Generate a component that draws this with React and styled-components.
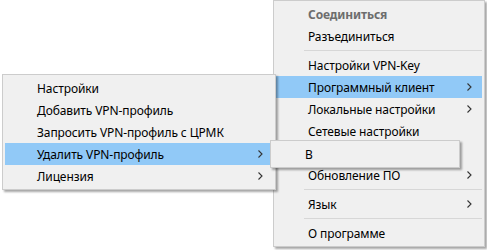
import React from 'react';
import styled, { createGlobalStyle } from 'styled-components';

const GlobalStyle = createGlobalStyle`
  html, body {
    margin: 0;
    padding: 0;
    background: #ffffff;
  }
`;

const Desktop = styled.div`
  position: relative;
  width: 487px;
  height: 250px;
  overflow: hidden;
  background: #ffffff;
  font-family: 'Noto Sans', 'Open Sans', sans-serif;
  font-size: 12px;
  letter-spacing: -0.1px;
  color: #000000;
`;

const Menu = styled.div`
  position: absolute;
  left: ${({ x }) => x}px;
  top: ${({ y }) => y}px;
  width: ${({ w }) => w}px;
  z-index: ${({ z }) => z};
  box-sizing: border-box;
  display: flex;
  flex-direction: column;
  padding: 2px;
  background: #f0f0f0;
  border: 1px solid #cccccc;
  box-shadow: 2px 2px 2px rgba(0, 0, 0, 0.35);
`;

const Item = styled.div`
  display: flex;
  align-items: center;
  height: 22px;
  padding-left: 32px;
  padding-right: 10px;
  background: ${({ active }) => (active ? '#91c9f7' : 'transparent')};
  color: ${({ disabled }) => (disabled ? '#6d6d6d' : '#000000')};
  font-weight: ${({ bold }) => (bold ? 700 : 400)};
  white-space: nowrap;
`;

const Label = styled.span`
  flex: 1;
`;

const Separator = styled.div`
  height: 7px;
  display: flex;
  align-items: center;
  padding-left: 28px;

  &::after {
    content: '';
    flex: 1;
    height: 1px;
    background: #d7d7d7;
  }
`;

const Chevron = () => (
  <svg width="5" height="8" viewBox="0 0 5 8">
    <polyline points="0.5,0.5 4,4 0.5,7.5" fill="none" stroke="#333333" strokeWidth="1.1" />
  </svg>
);

const MenuItem = ({ label, sub, ...rest }) => (
  <Item {...rest}>
    <Label>{label}</Label>
    {sub && <Chevron />}
  </Item>
);

const App = () => (
  <Desktop>
    <GlobalStyle />

    {/* main tray menu */}
    <Menu x={273} y={0} w={212} z={1}>
      <MenuItem label="Соединиться" disabled bold />
      <MenuItem label="Разъединиться" />
      <Separator />
      <MenuItem label="Настройки VPN-Key" />
      <MenuItem label="Программный клиент" sub active />
      <MenuItem label="Локальные настройки" sub />
      <MenuItem label="Сетевые настройки" />
      {/* row hidden under the profile list */}
      <MenuItem label="" />
      <MenuItem label="Обновление ПО" sub />
      <Separator />
      <MenuItem label="Язык" sub />
      <Separator />
      <MenuItem label="О программе" />
    </Menu>

    {/* program client submenu */}
    <Menu x={2} y={74} w={274} z={2}>
      <MenuItem label="Настройки" />
      <MenuItem label="Добавить VPN-профиль" />
      <MenuItem label="Запросить VPN-профиль с ЦРМК" />
      <MenuItem label="Удалить VPN-профиль" sub active />
      <MenuItem label="Лицензия" sub />
    </Menu>

    {/* profile list */}
    <Menu x={270} y={140} w={190} z={3}>
      <MenuItem label="В" />
    </Menu>
  </Desktop>
);

export default App;
